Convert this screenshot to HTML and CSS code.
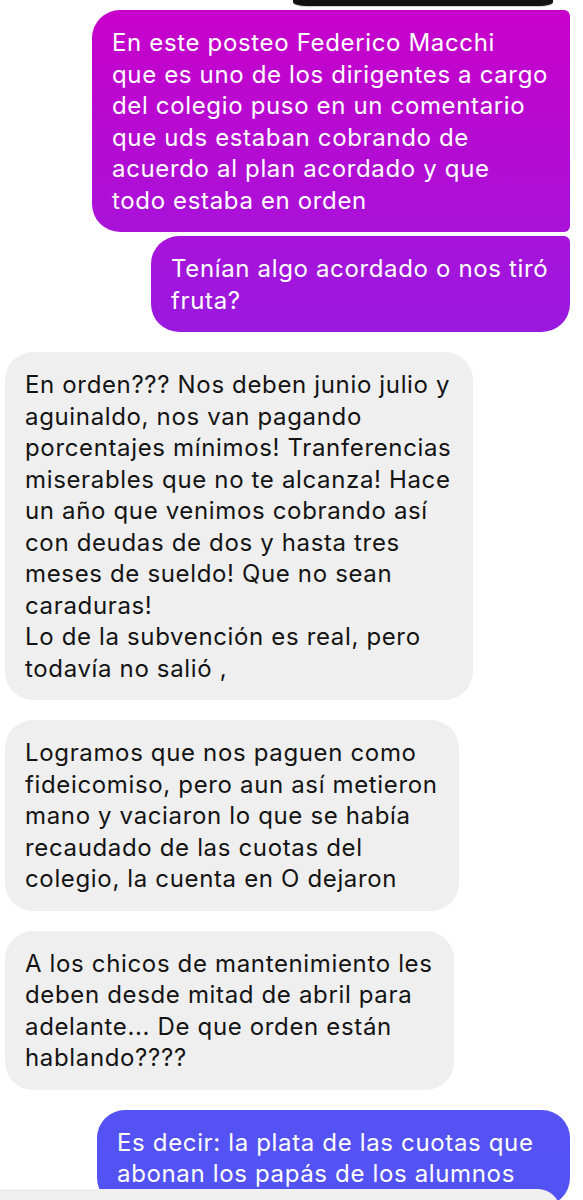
FILE: index.html
```html
<!DOCTYPE html>
<html>
<head>
  <meta charset="utf-8">
  <title>Chat</title>
  <link rel="stylesheet" href="styles.css">
</head>
<body>
  <div class="thread">
    <div class="prev-edge"></div>

    <div class="group outgoing">
      <div class="bubble first">En este posteo Federico Macchi<br>que es uno de los dirigentes a cargo del colegio puso en un comentario que uds estaban cobrando de acuerdo al plan acordado y que<br>todo estaba en orden</div>
      <div class="bubble last">Tenían algo acordado o nos tiró fruta?</div>
    </div>

    <div class="group incoming">
      <div class="bubble">En orden??? Nos deben junio julio y aguinaldo, nos van pagando porcentajes mínimos! Tranferencias miserables que no te alcanza! Hace un año que venimos cobrando así con deudas de dos y hasta tres meses de sueldo! Que no sean caraduras!<br>Lo de la subvención es real, pero todavía no salió ,</div>
    </div>

    <div class="group incoming">
      <div class="bubble">Logramos que nos paguen como fideicomiso, pero aun así metieron mano y vaciaron lo que se había recaudado de las cuotas del colegio, la cuenta en O dejaron</div>
    </div>

    <div class="group incoming">
      <div class="bubble">A los chicos de mantenimiento les deben desde mitad de abril para adelante... De que orden están hablando????</div>
    </div>

    <div class="group outgoing">
      <div class="bubble clipped">Es decir: la plata de las cuotas que abonan los papás de los alumnos</div>
    </div>
  </div>

  <div class="composer"></div>

  <script>
    // shrink each bubble to its widest line, like the app does
    function fitBubbles() {
      var bubbles = document.getElementsByClassName("bubble");
      for (var i = 0; i < bubbles.length; i++) {
        var bubble = bubbles[i];
        if (bubble.classList.contains("clipped")) continue;
        var range = document.createRange();
        range.selectNodeContents(bubble);
        var rects = range.getClientRects();
        var left = Infinity;
        var right = 0;
        for (var j = 0; j < rects.length; j++) {
          if (rects[j].width < 1) continue;
          left = Math.min(left, rects[j].left);
          right = Math.max(right, rects[j].right);
        }
        bubble.style.width = Math.ceil(right - left) + 41 + "px";
      }
    }
    fitBubbles();
  </script>
</body>
</html>
```

FILE: styles.css
```css
body {
  margin: 0;
  background: #fff;
  font-family: Inter, "Open Sans", sans-serif;
  font-size: 24px;
  letter-spacing: 0.65px;
  line-height: 31.5px;
  height: 1200px;
  overflow: hidden;
  position: relative;
}

.thread {
  display: flex;
  flex-direction: column;
  gap: 20px;
}

.prev-edge {
  margin-left: 293px;
  width: 260px;
  height: 6px;
  margin-bottom: -16px;
  background: #111;
  border-radius: 0 0 14px 14px / 0 0 4px 4px;
  box-shadow: 0 1px 1px rgba(0, 0, 0, 0.2);
}

.group {
  display: flex;
  flex-direction: column;
  gap: 4px;
}

.group.outgoing {
  align-items: flex-end;
  padding-right: 13px;
}

.group.incoming {
  align-items: flex-start;
  padding-left: 5px;
}

.bubble {
  box-sizing: border-box;
  padding: 17px 20px 16px;
  border-radius: 28px;
  max-width: 471px;
}

.outgoing .bubble {
  max-width: 478px;
  color: #fff;
  background: linear-gradient(180deg, #c900c9 0px, #a912d9 230px, #9a19df 330px, #5a50f3 1000px, #5253f4 1200px);
  background-attachment: fixed;
}

.outgoing .bubble.first {
  border-top-right-radius: 6px;
  border-bottom-right-radius: 6px;
}

.outgoing .bubble.last {
  border-top-right-radius: 6px;
}

.outgoing .bubble.clipped {
  width: 473px;
  max-width: none;
}

.incoming .bubble {
  color: #141414;
  background: #efefef;
}

.composer {
  position: absolute;
  left: 0;
  top: 1189px;
  width: 560px;
  height: 40px;
  background: #f0f0f0;
  border-top-right-radius: 22px;
}
```
